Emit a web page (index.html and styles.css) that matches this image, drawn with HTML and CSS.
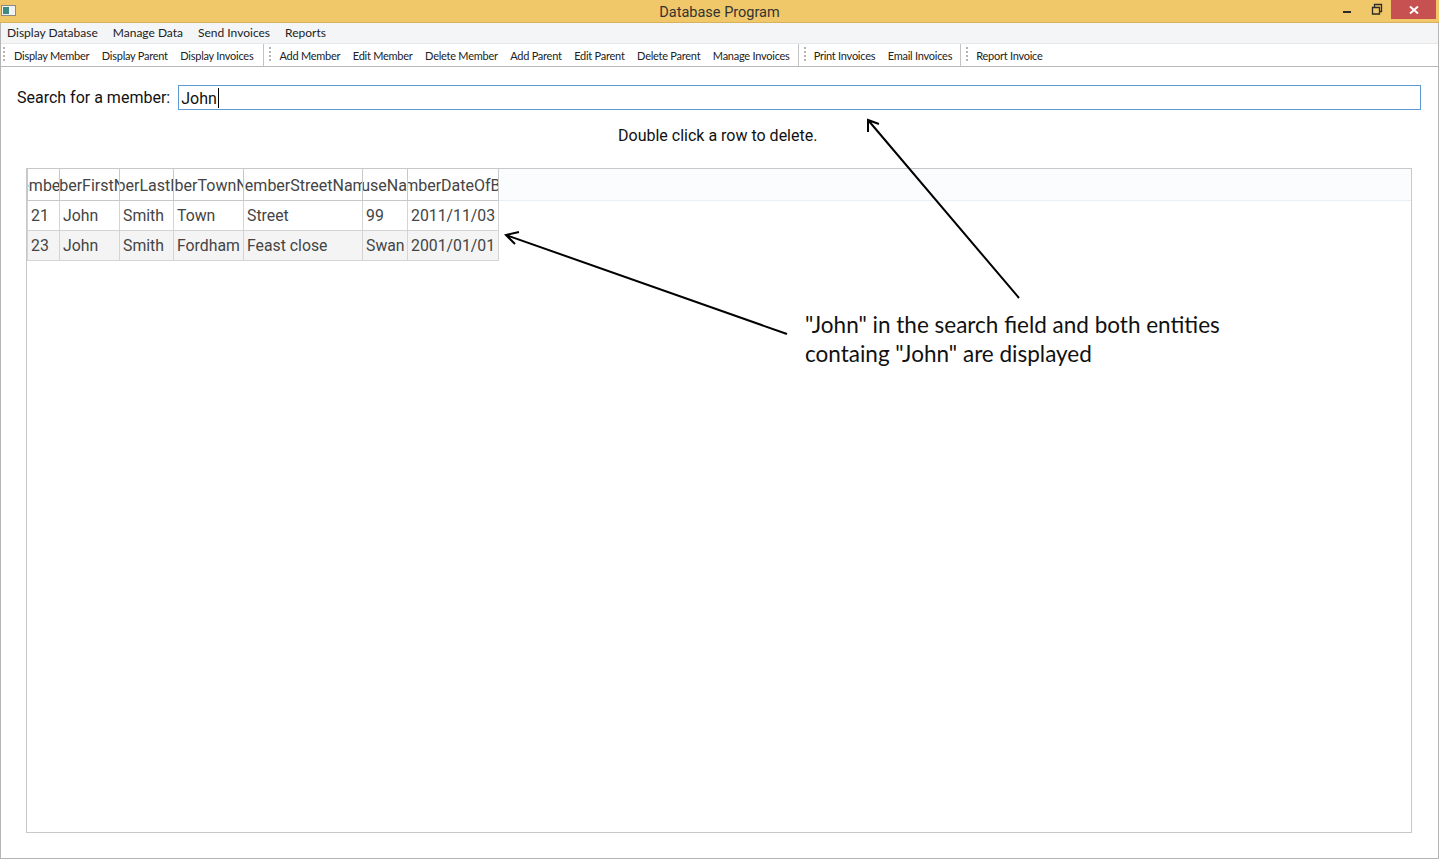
FILE: index.html
```html
<!DOCTYPE html>
<html lang="en">

<head>
    <meta charset="UTF-8">
    <title>Database Program</title>
    <link rel="stylesheet" href="styles.css">
</head>

<body>
    <div class="window">
        <div class="titlebar">
            <div class="app-icon"><span></span></div>
            <div class="title">Database Program</div>
            <div class="win-buttons">
                <svg class="win-btn" width="30" height="18" viewBox="0 0 30 18">
                    <rect x="12" y="11" width="8" height="2" fill="#2b2b2b" />
                </svg>
                <svg class="win-btn" width="30" height="18" viewBox="0 0 30 18">
                    <path d="M11.5 7.5h7v6.500h-7z M13.5 7v-2.500h7v7h-2" fill="none" stroke="#2b2b2b" stroke-width="1.300" />
                </svg>
                <div class="close-btn">
                    <svg width="10" height="10" viewBox="0 0 10 10">
                        <path d="M1 1.500l8 7M9 1.500l-8 7" stroke="#fff" stroke-width="2" />
                    </svg>
                </div>
            </div>
        </div>

        <div class="menubar">
            <span>Display Database</span>
            <span>Manage Data</span>
            <span>Send Invoices</span>
            <span>Reports</span>
        </div>

        <div class="toolbar">
            <div class="tool-group first">
                <i class="grip"></i>
                <span>Display Member</span>
                <span>Display Parent</span>
                <span>Display Invoices</span>
            </div>
            <div class="tool-group">
                <i class="grip"></i>
                <span>Add Member</span>
                <span>Edit Member</span>
                <span>Delete Member</span>
                <span>Add Parent</span>
                <span>Edit Parent</span>
                <span>Delete Parent</span>
                <span>Manage Invoices</span>
            </div>
            <div class="tool-group">
                <i class="grip"></i>
                <span>Print Invoices</span>
                <span>Email Invoices</span>
            </div>
            <div class="tool-group last">
                <i class="grip"></i>
                <span>Report Invoice</span>
            </div>
        </div>

        <div class="content">
            <div class="search-row">
                <label>Search for a member:</label>
                <div class="search-box"><span class="caret">John</span></div>
            </div>
            <p class="hint">Double click a row to delete.</p>

            <div class="grid-view">
                <table>
                    <colgroup>
                        <col class="c1">
                        <col class="c2">
                        <col class="c3">
                        <col class="c4">
                        <col class="c5">
                        <col class="c6">
                        <col class="c7">
                    </colgroup>
                    <thead>
                        <tr>
                            <th><div>MemberID</div></th>
                            <th><div>MemberFirstName</div></th>
                            <th><div>MemberLastName</div></th>
                            <th><div>MemberTownName</div></th>
                            <th><div>MemberStreetName</div></th>
                            <th><div>HouseName</div></th>
                            <th><div>MemberDateOfBirth</div></th>
                        </tr>
                    </thead>
                    <tbody>
                        <tr>
                            <td>21</td>
                            <td>John</td>
                            <td>Smith</td>
                            <td>Town</td>
                            <td>Street</td>
                            <td>99</td>
                            <td>2011/11/03</td>
                        </tr>
                        <tr>
                            <td>23</td>
                            <td>John</td>
                            <td>Smith</td>
                            <td>Fordham</td>
                            <td>Feast close</td>
                            <td>Swan</td>
                            <td>2001/01/01</td>
                        </tr>
                    </tbody>
                </table>
            </div>
        </div>

        <!-- annotations drawn on top of the screenshot -->
        <svg class="arrows" width="1439" height="859" viewBox="0 0 1439 859">
            <path d="M1019 298L868 120M868 132L868 120L879 124" fill="none" stroke="#000" stroke-width="2" />
            <path d="M787 334L506 235M515 244L506 235L519 232" fill="none" stroke="#000" stroke-width="2" />
        </svg>
        <div class="callout">"John" in the search field and both entities<br>containg "John" are displayed</div>
    </div>
</body>

</html>
```

FILE: styles.css
```css
* {
    margin: 0;
    padding: 0;
    box-sizing: border-box;
}

body {
    font-family: 'Roboto', 'Noto Sans', sans-serif;
    color: #111;
    background: #fff;
    overflow: hidden;
}

.window {
    position: relative;
    width: 1439px;
    height: 859px;
    border-left: 1px solid #b5b5b5;
    border-right: 1px solid #b5b5b5;
    border-bottom: 1px solid #b5b5b5;
    display: flex;
    flex-direction: column;
}

.titlebar {
    height: 23px;
    margin-left: -1px;
    margin-right: -1px;
    background: #f0c869;
    border-bottom: 1px solid #d6b25f;
    display: grid;
    grid-template-columns: 1fr auto 1fr;
    align-items: start;
}

.app-icon {
    width: 15px;
    height: 11px;
    margin: 5px 0 0 1px;
    background: #f2f2f2;
    border: 1px solid #8a8a8a;
}

.app-icon span {
    display: block;
    width: 6px;
    height: 7px;
    margin: 1px 0 0 1px;
    background: #3f8a80;
}

.title {
    font-size: 14.500px;
    line-height: 25px;
    color: #333;
}

.win-buttons {
    justify-self: end;
    display: flex;
    align-items: flex-start;
    margin-right: 3px;
}

.win-btn {
    display: block;
}

.close-btn {
    width: 45px;
    height: 19px;
    background: #c75050;
    display: flex;
    align-items: center;
    justify-content: center;
}

.menubar {
    height: 21px;
    background: #f4f5f7;
    border-bottom: 1px solid #e8e8e8;
    display: flex;
    gap: 15px;
    padding-left: 6px;
    font-family: 'Lato', sans-serif;
    font-size: 12px;
    line-height: 20px;
    color: #222;
}

.toolbar {
    height: 23px;
    border-bottom: 1px solid #b9b9b9;
    display: flex;
    font-family: 'Lato', sans-serif;
    font-size: 11px;
    letter-spacing: -0.250px;
    line-height: 23px;
    color: #222;
}

.tool-group {
    display: flex;
    gap: 12.500px;
    padding: 0 8px 0 15px;
    border-right: 1px solid #c4c4c4;
    height: 22px;
    position: relative;
}

.tool-group.first {
    padding: 0 10px 0 13px;
}

.tool-group.last {
    border-right: none;
}

.grip {
    position: absolute;
    left: 5px;
    top: 3px;
    width: 2px;
    height: 16px;
    background: repeating-linear-gradient(#b5b5b5 0 2px, transparent 2px 4px);
}

.tool-group.first .grip {
    left: 2px;
}

.content {
    flex: 1;
    padding: 18px 17px 25px 16px;
    display: flex;
    flex-direction: column;
}

.search-row {
    display: flex;
    align-items: center;
    gap: 8px;
    height: 25px;
}

.search-row label {
    font-size: 16px;
    line-height: 27px;
}

.search-box {
    flex: 1;
    height: 25px;
    border: 1px solid #5b9bd5;
    padding-left: 2px;
    font-size: 16px;
    line-height: 23px;
}

.caret {
    display: inline-block;
    height: 20px;
    line-height: 22px;
    margin-top: 2px;
    padding-right: 1px;
    border-right: 1px solid #000;
    vertical-align: top;
}

.hint {
    font-size: 16px;
    line-height: 20px;
    margin-top: 16px;
    margin-bottom: -1px;
    padding-left: 601px;
}

.grid-view {
    flex: 1;
    margin: 23px 9px 0 9px;
    border: 1px solid #c8c8c8;
    background: linear-gradient(#fbfcfd 0 31px, #e6f0fa 31px 32px, #fff 32px);
}

table {
    border-collapse: collapse;
    table-layout: fixed;
    width: 471px;
    color: #444;
}

.c1 {
    width: 32px;
}

.c2 {
    width: 60px;
}

.c3 {
    width: 54px;
}

.c4 {
    width: 70px;
}

.c5 {
    width: 119px;
}

.c6 {
    width: 45px;
}

.c7 {
    width: 91px;
}

th {
    height: 31px;
    padding: 2px 0 0;
    font-weight: normal;
    font-size: 16px;
    background: #fff;
    border: 1px solid #c8c8c8;
    border-top: none;
    overflow: hidden;
}

th div {
    display: flex;
    justify-content: center;
    white-space: nowrap;
    overflow: hidden;
}

td {
    height: 30px;
    padding: 0 0 0 3px;
    font-size: 15.800px;
    border: 1px solid #d4d4d4;
    white-space: nowrap;
    overflow: hidden;
}

tbody tr:nth-child(2n) {
    background: #f4f4f4;
}

.arrows {
    position: absolute;
    left: -1px;
    top: 0;
    pointer-events: none;
}

.callout {
    position: absolute;
    left: 804px;
    top: 310px;
    font-family: 'Lato', sans-serif;
    font-size: 22.500px;
    line-height: 29px;
    white-space: nowrap;
    color: #111;
}
```
